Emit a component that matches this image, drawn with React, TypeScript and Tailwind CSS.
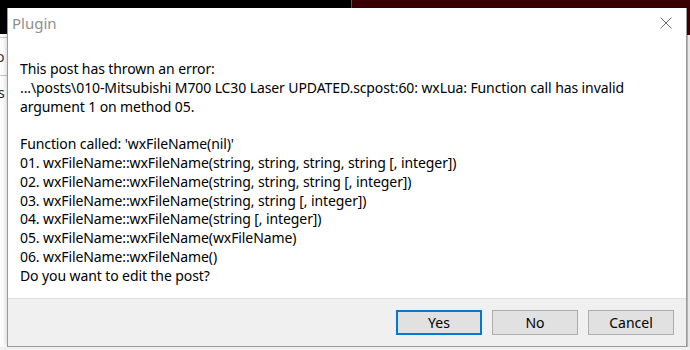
import React from 'react';

const lines = [
  'This post has thrown an error:',
  '...\\posts\\010-Mitsubishi M700 LC30 Laser UPDATED.scpost:60: wxLua: Function call has invalid',
  'argument 1 on method 05.',
  '',
  "Function called: 'wxFileName(nil)'",
  '01. wxFileName::wxFileName(string, string, string, string [, integer])',
  '02. wxFileName::wxFileName(string, string, string [, integer])',
  '03. wxFileName::wxFileName(string, string [, integer])',
  '04. wxFileName::wxFileName(string [, integer])',
  '05. wxFileName::wxFileName(wxFileName)',
  '06. wxFileName::wxFileName()',
  'Do you want to edit the post?',
];

function CloseIcon() {
  return (
    <svg width="12" height="12" viewBox="0 0 12 12" fill="none">
      <path d="M0.5 0.5L11.5 11.5M11.5 0.5L0.5 11.5" stroke="#6b6b6b" strokeWidth="1" />
    </svg>
  );
}

function DialogButton({ label, primary }: { label: string; primary?: boolean }) {
  return (
    <button
      className={
        primary
          ? 'w-[86px] h-[25px] bg-[#e1e1e1] border-2 border-[#0078d7] text-[14px] text-black'
          : 'w-[86px] h-[25px] bg-[#e1e1e1] border border-[#adadad] text-[14px] text-black'
      }
    >
      {label}
    </button>
  );
}

export default function App() {
  return (
    <div
      className="w-[690px] h-[350px] overflow-hidden bg-white flex flex-col"
      style={{ fontFamily: '"Segoe UI", "Noto Sans", sans-serif' }}
    >
      {/* desktop strip behind the dialog */}
      <div className="h-[8px] flex shrink-0">
        <div className="w-[351px] bg-black" />
        <div className="w-px bg-[#5a5a5a]" />
        <div className="flex-1 bg-[#3a0003]" />
      </div>

      <div className="flex flex-1">
        {/* left edge of window behind */}
        <div className="w-[7px] flex flex-col">
          <div className="h-[26px] bg-black" />
          <div className="h-[3px] bg-white" />
          <div className="h-px bg-[#c8c8c8]" />
          <div className="h-[37px] bg-white text-[14px] leading-[37px] overflow-hidden">
            <span className="block -ml-[4px] text-[#333]">o</span>
          </div>
          <div className="h-px bg-[#c8c8c8]" />
          <div className="flex-1 bg-white text-[14px] leading-[34px] overflow-hidden">
            <span className="block -ml-[2px] text-[#222]">s</span>
          </div>
        </div>

        {/* dialog */}
        <div className="w-[680px] flex flex-col bg-white border-x border-b border-[#9b9b9b] shadow-[0_0_6px_rgba(0,0,0,0.25)]">
          <div className="h-[30px] flex items-center justify-between pl-[4px] pr-[14px]">
            <span className="text-[15px] text-[#8f8f8f]">Plugin</span>
            <CloseIcon />
          </div>
          <div className="flex-1 pt-[22px] pl-[12px] text-[14px] leading-[18.8px] tracking-[-0.1px] text-black">
            {lines.map((l, i) => (
              <div key={i} className="h-[18.8px] whitespace-pre">
                {l}
              </div>
            ))}
          </div>
          <div className="h-[48px] bg-[#f0f0f0] border-t border-[#dfdfdf] flex items-center justify-end gap-[10px] pr-[12px]">
            <DialogButton label="Yes" primary />
            <DialogButton label="No" />
            <DialogButton label="Cancel" />
          </div>
        </div>

        {/* right edge of window behind */}
        <div className="flex-1 flex flex-col">
          <div className="h-[27px] bg-[#3a0003]" />
          <div className="flex-1 bg-[#e8e8e8] border-l border-[#b5b5b5]" />
        </div>
      </div>
      <div className="h-[3px] bg-[#f0f0f0] shrink-0" />
    </div>
  );
}
